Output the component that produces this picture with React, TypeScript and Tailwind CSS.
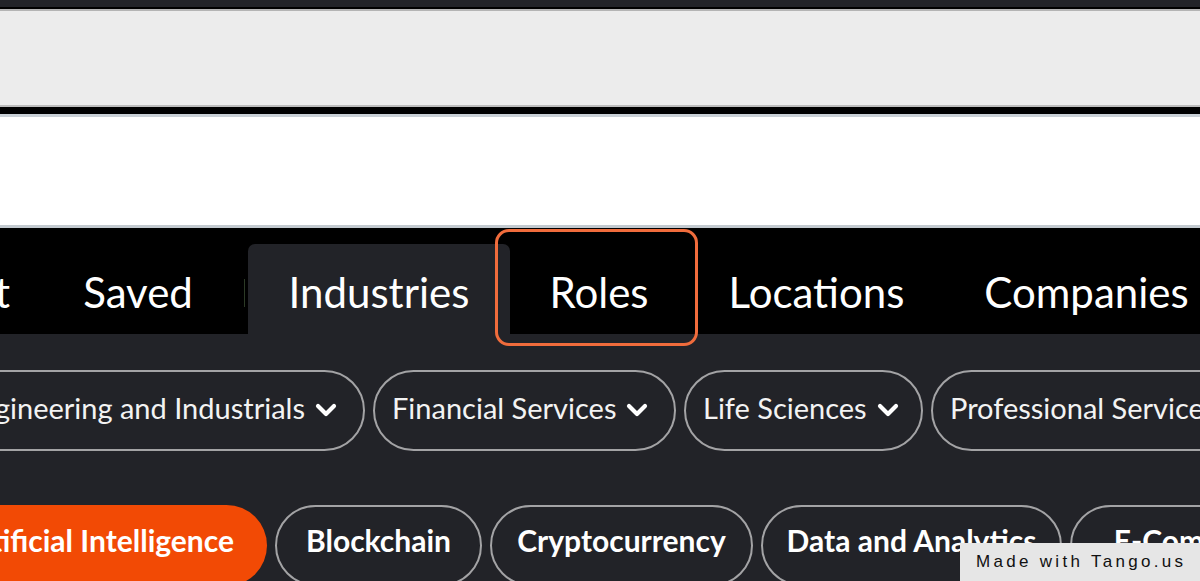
import React from 'react';

const tabs = [
  { label: 'Industries', width: 'w-[262px]', active: true },
  { label: 'Roles', width: 'w-[178px]', highlighted: true },
  { label: 'Locations', width: 'w-[257px]' },
  { label: 'Companies', width: 'w-[283px]' },
];

const industries = [
  { label: 'Financial Services', width: 'w-[303px]' },
  { label: 'Life Sciences', width: 'w-[239px]' },
  { label: 'Professional Services', width: 'w-[330px]' },
];

const topics = [
  { label: 'Blockchain', width: 'w-[207px]' },
  { label: 'Cryptocurrency', width: 'w-[263px]' },
  { label: 'Data and Analytics', width: 'w-[301px]' },
  { label: 'E-Commerce', width: 'w-[260px]' },
];

function Chevron() {
  return (
    <svg width="22" height="14" viewBox="0 0 22 14" className="shrink-0 mt-[4px]">
      <path d="M3 3 L11 11 L19 3" fill="none" stroke="white" strokeWidth="4.2" strokeLinecap="round" strokeLinejoin="round" />
    </svg>
  );
}

function Pill({ label, width, chevron = false }: { label: string; width: string; chevron?: boolean }) {
  return (
    <div
      className={`${width} h-[81px] shrink-0 rounded-full border-2 border-[#a3a3a5] flex items-center pl-[17px] pr-[26px] pb-[5px] gap-[10px] text-[29px] text-[#f3f3f3] whitespace-nowrap overflow-hidden`}
    >
      <span>{label}</span>
      {chevron && <Chevron />}
    </div>
  );
}

export default function App() {
  return (
    <div className="w-[1200px] h-[581px] overflow-hidden relative bg-[#222328]" style={{ fontFamily: 'Lato, "Noto Sans", sans-serif' }}>
      {/* browser chrome strips */}
      <div className="h-[7px] bg-[#222328]" />
      <div className="h-[2px] bg-black" />
      <div className="h-[2px] bg-[#b4b4b4]" />
      <div className="h-[94px] bg-[#ececec]" />
      <div className="h-[2px] bg-[#bdbdbd]" />
      <div className="h-[7px] bg-black" />
      <div className="h-[3px] bg-[#c9d0d6]" />
      <div className="h-[108px] bg-white" />
      <div className="h-[3px] bg-[#c3cad0]" />

      {/* tab row */}
      <div className="h-[106px] bg-black flex items-end whitespace-nowrap">
        <div className="w-[44px] h-[90px] shrink-0 flex items-center justify-end pr-[34px] pt-[7px] text-[42px] text-white">
          <span>Latest</span>
        </div>
        <div className="w-[188px] h-[90px] shrink-0 flex items-center justify-center pt-[7px] text-[42px] text-white">Saved</div>
        <div className="w-[16px] h-[90px] shrink-0 flex items-center pl-[12px] pt-[7px]">
          <div className="w-[1px] h-[28px] bg-[#2c3a26]" />
        </div>
        {tabs.map((t) => (
          <div
            key={t.label}
            className={`${t.width} h-[90px] shrink-0 relative flex items-center justify-center pt-[7px] text-[42px] text-white ${t.active ? 'bg-[#222328] rounded-t-[7px]' : ''}`}
          >
            {t.highlighted && (
              <div className="absolute -left-[15px] -right-[10px] -top-[15px] -bottom-[12px] rounded-[14px] border-[3px] border-[#f06c3c]" />
            )}
            <span className="relative">{t.label}</span>
          </div>
        ))}
      </div>

      {/* industry pills */}
      <div className="mt-[36px] flex gap-[8px] -ml-[135px]">
        <div className="w-[500px] h-[81px] shrink-0 rounded-full border-2 border-[#a3a3a5] flex items-center justify-end pr-[26px] pb-[5px] gap-[10px] text-[29px] text-[#f3f3f3] whitespace-nowrap overflow-hidden">
          <span>Engineering and Industrials</span>
          <Chevron />
        </div>
        {industries.map((p, i) => (
          <Pill key={p.label} label={p.label} width={p.width} chevron={i < 2} />
        ))}
      </div>

      {/* topic pills */}
      <div className="mt-[54px] flex gap-[8px] -ml-[133px] font-bold">
        <div className="w-[400px] h-[81px] shrink-0 rounded-full bg-[#f24a05] flex items-center justify-end pr-[33px] pb-[10px] text-[30px] text-white whitespace-nowrap overflow-hidden">
          <span>Artificial Intelligence</span>
        </div>
        {topics.map((p) => (
          <div
            key={p.label}
            className={`${p.width} h-[81px] shrink-0 rounded-full border-2 border-[#a3a3a5] flex items-center justify-center pb-[10px] text-[30px] text-white whitespace-nowrap overflow-hidden`}
          >
            {p.label}
          </div>
        ))}
      </div>

      {/* watermark */}
      <div
        className="absolute right-0 bottom-0 w-[240px] h-[38px] bg-[#e6e6e6] flex items-center pl-[16px] text-[17px] tracking-[3.3px] text-[#111]"
        style={{ fontFamily: '"Liberation Sans", sans-serif' }}
      >
        Made with Tango.us
      </div>
    </div>
  );
}
